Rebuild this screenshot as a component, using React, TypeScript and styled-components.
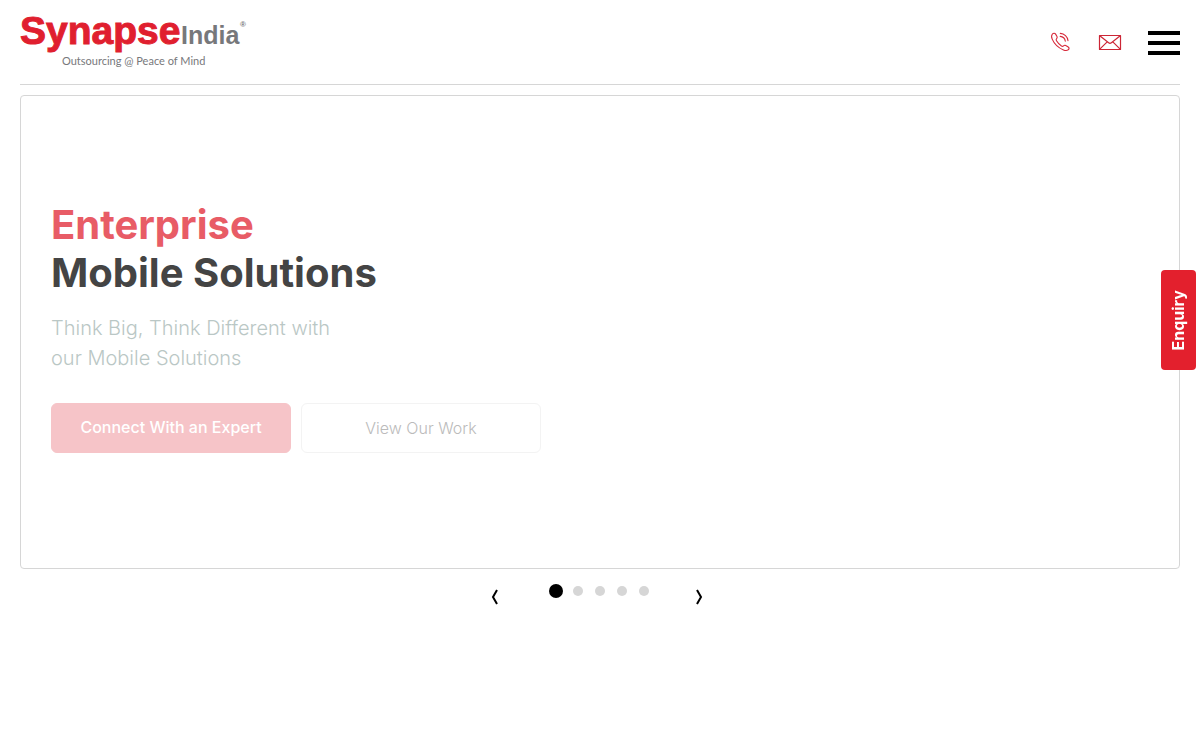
import React, { useState } from "react";
import styled, { createGlobalStyle } from "styled-components";

const GlobalStyle = createGlobalStyle`
  *, *::before, *::after { box-sizing: border-box; }
  body {
    margin: 0;
    background: #fff;
    font-family: Inter, "Liberation Sans", sans-serif;
    color: #444;
  }
  h1, p { margin: 0; }
  button { font: inherit; cursor: pointer; }
`;

const Page = styled.div`
  padding: 0 20px;
`;

const Header = styled.header`
  display: flex;
  justify-content: space-between;
  align-items: center;
  height: 85px;
  border-bottom: 1px solid #d6d6d6;
`;

const LogoLink = styled.a`
  display: block;
  height: 84px;
`;

const LogoSvg = styled.svg`
  display: block;
`;

const Actions = styled.nav`
  display: flex;
  align-items: center;
`;

const IconLink = styled.a`
  display: flex;
  margin-right: 26px;
`;

const MenuButton = styled.button`
  display: flex;
  flex-direction: column;
  gap: 6px;
  width: 32px;
  padding: 2px 0 0;
  border: 0;
  background: none;
`;

const MenuBar = styled.span`
  height: 4px;
  width: 100%;
  background: #000;
`;

const Slide = styled.section`
  display: flex;
  flex-direction: column;
  justify-content: center;
  min-height: 474px;
  margin-top: 10px;
  padding: 20px 30px 30px;
  border: 1px solid #d6d6d6;
  border-radius: 4px;
`;

const Title = styled.h1`
  font-size: 40px;
  line-height: 48px;
  font-weight: 700;
  color: #444;
`;

const TitleAccent = styled.span`
  display: block;
  color: #e85c66;
`;

const Lead = styled.p`
  max-width: 300px;
  margin: 16px 0 30px;
  font-size: 20px;
  line-height: 30px;
  font-weight: 300;
  color: #bac7c5;
`;

const ButtonRow = styled.div`
  display: flex;
  flex-wrap: wrap;
  gap: 10px;
`;

const SlideButton = styled.button<{ $filled?: boolean }>`
  width: 240px;
  height: 50px;
  padding: 0 0 ${(p) => (p.$filled ? 2 : 0)}px;
  border: 1px solid ${(p) => (p.$filled ? "#f6c4c8" : "#f3f3f3")};
  border-radius: 6px;
  background: ${(p) => (p.$filled ? "#f6c4c8" : "#fff")};
  color: ${(p) => (p.$filled ? "#fff" : "#bbb")};
  font-size: 16px;
  font-weight: ${(p) => (p.$filled ? 500 : 300)};
`;

const Pager = styled.div`
  display: flex;
  justify-content: center;
  align-items: flex-start;
  gap: 45px;
  padding: 14px 6px 0 0;
`;

const Arrow = styled.button`
  display: flex;
  margin-top: 5px;
  padding: 0;
  border: 0;
  background: none;
`;

const Dots = styled.div`
  display: flex;
  align-items: center;
  gap: 8px;
  height: 16px;
  padding-left: 6px;
`;

const Dot = styled.button<{ $active: boolean }>`
  display: flex;
  justify-content: center;
  align-items: center;
  width: 14px;
  height: 14px;
  padding: 0;
  border: 0;
  background: none;

  &::before {
    content: "";
    width: ${(p) => (p.$active ? 14 : 10)}px;
    height: ${(p) => (p.$active ? 14 : 10)}px;
    border-radius: 50%;
    background: ${(p) => (p.$active ? "#000" : "#d6d6d6")};
  }
`;

const EnquiryTab = styled.button`
  position: fixed;
  top: 270px;
  right: 4px;
  width: 35px;
  height: 100px;
  padding: 0;
  border: 0;
  border-radius: 4px;
  background: #e3202d;
  color: #fff;
  font-size: 16px;
  line-height: 35px;
  font-weight: 700;
  writing-mode: vertical-rl;
`;

const EnquiryLabel = styled.span`
  display: inline-block;
  transform: rotate(180deg);
`;

const Logo = () => (
  <LogoSvg width="230" height="84" viewBox="0 0 230 84" role="img" aria-label="SynapseIndia">
    <text x="0" y="44" fontFamily="'Liberation Sans', sans-serif" fontWeight="700" fontSize="39" fill="#e01f2f" stroke="#e01f2f" strokeWidth="1">
      Synapse
    </text>
    <text x="161" y="44" fontFamily="'Liberation Sans', sans-serif" fontWeight="700" fontSize="25" fill="#77787b">
      India
    </text>
    <text x="220" y="27" fontFamily="'Liberation Sans', sans-serif" fontWeight="700" fontSize="8" fill="#77787b">
      ®
    </text>
    <text x="42" y="65" fontFamily="Lato, sans-serif" fontSize="11" fill="#77787b">
      Outsourcing @ Peace of Mind
    </text>
  </LogoSvg>
);

const PhoneIcon = () => (
  <svg width="22" height="22" viewBox="0 0 22 22" fill="none" stroke="#d62839" strokeWidth="1.1" strokeLinecap="round" strokeLinejoin="round" aria-hidden="true">
    <path d="M2.4 3C3.4 1.9 4.9 2 5.6 3.1L7 5.5C7.5 6.5 7.2 7.1 6.5 7.8C5.9 8.4 6 9 6.5 9.8C7.8 12 9.4 13.6 11.5 15C12.3 15.5 12.9 15.5 13.5 14.9C14.2 14.2 14.9 13.9 15.8 14.5L18.2 16C19.4 16.8 19.3 17.9 18.2 18.8C16.9 19.8 15.1 19.6 13.5 18.9C8.5 16.9 4.2 12.8 2.2 8.1C1.4 6.2 1.3 4.3 2.4 3Z" />
    <path d="M10.2 5.4C12.9 5.6 14.9 7.6 15.3 10.2M10.3 2.4C14.3 2.6 17.6 5.6 18 9.6" />
  </svg>
);

const MailIcon = () => (
  <svg width="24" height="22" viewBox="0 0 24 22" fill="none" stroke="#cc2636" strokeWidth="1.2" strokeLinejoin="round" aria-hidden="true">
    <rect x="1.5" y="4.5" width="21" height="14" />
    <path d="M1.8 4.8L10.6 11.8Q12 12.9 13.4 11.8L22.2 4.8M1.8 18.2L9.2 10.8M22.2 18.2L14.8 10.8" />
  </svg>
);

const ArrowIcon = ({ d }: { d: string }) => (
  <svg width="8" height="18" viewBox="0 0 8 18" fill="none" stroke="#000" strokeWidth="2" aria-hidden="true">
    <path d={d} />
  </svg>
);

const SLIDE_COUNT = 5;

export default function App() {
  const [active, setActive] = useState(0);
  const move = (step: number) => setActive((active + step + SLIDE_COUNT) % SLIDE_COUNT);

  return (
    <>
      <GlobalStyle />
      <Page>
        <Header>
          <LogoLink href="#home">
            <Logo />
          </LogoLink>
          <Actions aria-label="Main">
            <IconLink href="#phone" aria-label="Call us">
              <PhoneIcon />
            </IconLink>
            <IconLink href="#mail" aria-label="Email us">
              <MailIcon />
            </IconLink>
            <MenuButton aria-label="Menu">
              <MenuBar />
              <MenuBar />
              <MenuBar />
            </MenuButton>
          </Actions>
        </Header>
        <main>
          <Slide>
            <Title>
              <TitleAccent>Enterprise</TitleAccent>
              Mobile Solutions
            </Title>
            <Lead>Think Big, Think Different with our Mobile Solutions</Lead>
            <ButtonRow>
              <SlideButton $filled>Connect With an Expert</SlideButton>
              <SlideButton>View Our Work</SlideButton>
            </ButtonRow>
          </Slide>
          <Pager>
            <Arrow aria-label="Previous slide" onClick={() => move(-1)}>
              <ArrowIcon d="M7 2L3 9L7 16" />
            </Arrow>
            <Dots>
              {Array.from({ length: SLIDE_COUNT }, (_, i) => (
                <Dot key={i} $active={i === active} aria-label={`Slide ${i + 1}`} onClick={() => setActive(i)} />
              ))}
            </Dots>
            <Arrow aria-label="Next slide" onClick={() => move(1)}>
              <ArrowIcon d="M1 2L5 9L1 16" />
            </Arrow>
          </Pager>
        </main>
      </Page>
      <EnquiryTab>
        <EnquiryLabel>Enquiry</EnquiryLabel>
      </EnquiryTab>
    </>
  );
}
